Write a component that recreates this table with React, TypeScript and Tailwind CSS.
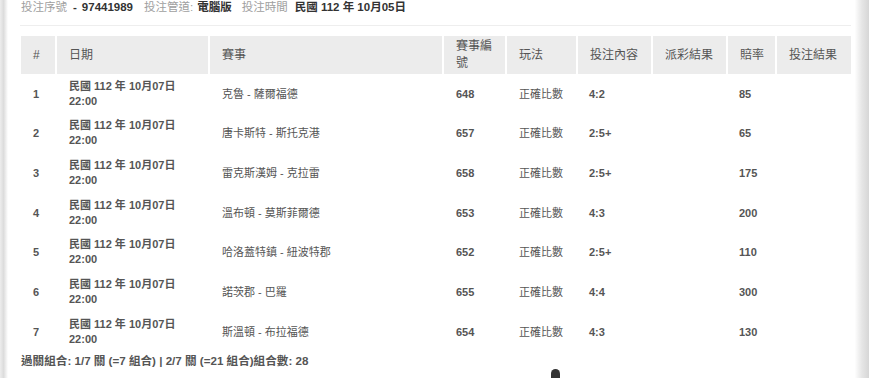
import React from 'react'

type Row = {
  no: number
  match: string
  code: string
  pick: string
  odds: string
}

const rows: Row[] = [
  { no: 1, match: '克魯 - 薩爾福德', code: '648', pick: '4:2', odds: '85' },
  { no: 2, match: '唐卡斯特 - 斯托克港', code: '657', pick: '2:5+', odds: '65' },
  { no: 3, match: '雷克斯漢姆 - 克拉雷', code: '658', pick: '2:5+', odds: '175' },
  { no: 4, match: '溫布頓 - 莫斯菲爾德', code: '653', pick: '4:3', odds: '200' },
  { no: 5, match: '哈洛蓋特鎮 - 紐波特郡', code: '652', pick: '2:5+', odds: '110' },
  { no: 6, match: '諾茨郡 - 巴羅', code: '655', pick: '4:4', odds: '300' },
  { no: 7, match: '斯溫頓 - 布拉福德', code: '654', pick: '4:3', odds: '130' },
]

const headers = ['#', '日期', '賽事', '賽事編號', '玩法', '投注內容', '派彩結果', '賠率', '投注結果']
const widths = ['w-[36px]', 'w-[153px]', 'w-[234px]', 'w-[63px]', 'w-[71px]', 'w-[75px]', 'w-[75px]', 'w-[49px]', 'w-[74px]']

export default function App() {
  return (
    <div
      className="relative flex h-[378px] w-[869px] overflow-hidden bg-white text-[#555]"
      style={{ fontFamily: '"Liberation Sans", Arial, "Noto Sans CJK TC", sans-serif' }}
    >
      <div className="w-[8px] shrink-0 bg-[linear-gradient(to_right,#ededed,#dcdcdc_45%,#ffffff)]" />

      <div className="w-[843px] shrink-0 pl-[13px]">
        {/* bet info line */}
        <div className="flex items-center whitespace-nowrap text-[11.5px] leading-[14px]">
          <span className="text-[#a0a0a0]">投注序號</span>
          <span className="ml-[6px] font-bold text-[#333]">-</span>
          <span className="ml-[5px] font-bold text-[#333]">97441989</span>
          <span className="ml-[11px] text-[#a0a0a0]">投注管道:</span>
          <span className="ml-[4px] font-bold text-[#333]">電腦版</span>
          <span className="ml-[10px] text-[#a0a0a0]">投注時間</span>
          <span className="ml-[7px] font-bold text-[#333]">民國 112 年 10月05日</span>
        </div>
        <div className="ml-[-1px] mt-[11px] h-px w-[831px] bg-[#eeeeee]" />

        <table className="mt-[10px] w-[830px] table-fixed border-separate border-spacing-0">
          <thead>
            <tr className="h-[38px] bg-[#ececec]">
              {headers.map((h, i) => (
                <th
                  key={h}
                  className={`${widths[i]} ${i < headers.length - 1 ? 'border-r-2 border-white' : ''} pl-3 pr-[6px] text-left align-middle text-[12px] font-normal leading-[17px] text-[#555]`}
                >
                  {h}
                </th>
              ))}
            </tr>
          </thead>
          <tbody>
            {rows.map(r => (
              <tr key={r.no} className="h-[39.67px]">
                <td className="pl-3 align-middle text-[11px] font-bold">{r.no}</td>
                <td className="pl-3 align-middle text-[11px] font-bold leading-[15px]">
                  民國 112 年 10月07日
                  <br />
                  22:00
                </td>
                <td className="pl-3 align-middle text-[11px]">{r.match}</td>
                <td className="pl-3 align-middle text-[11px] font-bold">{r.code}</td>
                <td className="pl-3 align-middle text-[11px]">正確比數</td>
                <td className="pl-[11px] align-middle text-[11px] font-bold">{r.pick}</td>
                <td className="pl-3 align-middle text-[11px]"></td>
                <td className="pl-[11px] align-middle text-[11px] font-bold">{r.odds}</td>
                <td className="pl-3 align-middle text-[11px]"></td>
              </tr>
            ))}
          </tbody>
        </table>

        <div className="mt-[2px] whitespace-nowrap text-[11.6px] font-bold leading-[14px] text-[#555]">
          過關組合: 1/7 關 (=7 組合) | 2/7 關 (=21 組合)組合數: 28
        </div>
      </div>

      <div className="flex-1 bg-[linear-gradient(to_right,#ffffff,#ffffff_20%,#e6e6e6_60%,#d6d6d6)]" />

      {/* cursor-like marker at bottom */}
      <div className="absolute left-[551px] top-[369px] h-[14px] w-[9px] rounded-t-full bg-[#333]" />
    </div>
  )
}
